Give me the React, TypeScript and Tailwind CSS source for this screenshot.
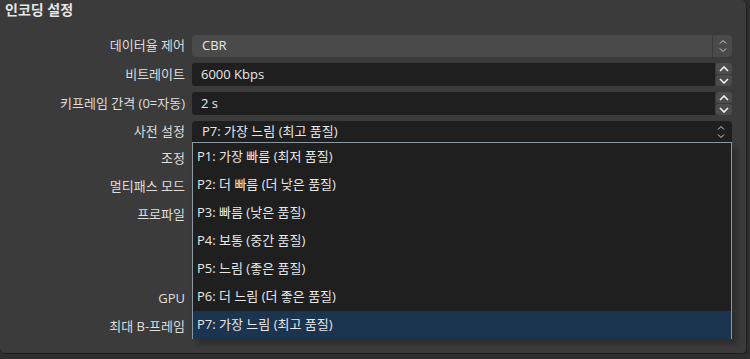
import React from 'react';

const presets = [
    'P1: 가장 빠름 (최저 품질)',
    'P2: 더 빠름 (더 낮은 품질)',
    'P3: 빠름 (낮은 품질)',
    'P4: 보통 (중간 품질)',
    'P5: 느림 (좋은 품질)',
    'P6: 더 느림 (더 좋은 품질)',
    'P7: 가장 느림 (최고 품질)',
];

const labels = [
    { text: '데이터율 제어', h: 'h-[28px]' },
    { text: '비트레이트', h: 'h-[29px]' },
    { text: '키프레임 간격 (0=자동)', h: 'h-[29px]' },
    { text: '사전 설정', h: 'h-[27px]' },
    { text: '조정', h: 'h-[28px]' },
    { text: '멀티패스 모드', h: 'h-[28px]' },
    { text: '프로파일', h: 'h-[28px]' },
    { text: '', h: 'h-[28px]' },
    { text: '', h: 'h-[28px]' },
    { text: 'GPU', h: 'h-[28px]' },
    { text: '최대 B-프레임', h: 'h-[28px]' },
];

const ComboArrows = () => (
    <svg width="8" height="14" viewBox="0 0 8 14" fill="none" stroke="#d8d8d8" strokeWidth="1">
        <polyline points="1,4.5 4,1.5 7,4.5" />
        <polyline points="1,9.5 4,12.5 7,9.5" />
    </svg>
);

const SpinButtons = () => (
    <div className="flex flex-col gap-[1px] w-[16px] h-full">
        <div className="flex-1 bg-[#4c4c4c] rounded-[3px] flex items-center justify-center">
            <svg width="10" height="6" viewBox="0 0 10 6" fill="none" stroke="#f0f0f0" strokeWidth="1.6">
                <polyline points="1,5 5,1 9,5" />
            </svg>
        </div>
        <div className="flex-1 bg-[#4c4c4c] rounded-[3px] flex items-center justify-center">
            <svg width="10" height="6" viewBox="0 0 10 6" fill="none" stroke="#f0f0f0" strokeWidth="1.6">
                <polyline points="1,1 5,5 9,1" />
            </svg>
        </div>
    </div>
);

const SpinBox = ({ value }: { value: string }) => (
    <div className="flex h-[23px] w-[540px] gap-[1px]">
        <div className="flex-1 bg-[#1f1f1f] rounded-l-[3px] flex items-center pl-[9px] text-[13px] text-[#e8e8e8]">
            {value}
        </div>
        <SpinButtons />
    </div>
);

export default function App() {
    return (
        <div className="w-[750px] h-[359px] bg-[#2e2e2e] [font-family:'Open_Sans','Noto_Sans_CJK_KR',sans-serif] overflow-hidden">
            <div className="relative w-[747px] h-[354px] bg-[#3b3b3b] rounded-tr-[5px] rounded-b-[5px] border-b border-r border-[#1e1e1e]">
                <div className="h-[32px] pl-[5px] pt-[1px] text-[14px] font-bold leading-[18px] text-[#e6e6e6]">
                    인코딩 설정
                </div>

                <div className="flex">
                    <div className="w-[192px] flex flex-col">
                        {labels.map((l, i) => (
                            <div
                                key={i}
                                className={`${l.h} flex items-center justify-end pr-[7px] text-[13px] text-[#dedede] whitespace-nowrap`}
                            >
                                {l.text}
                            </div>
                        ))}
                    </div>

                    <div className="flex flex-col">
                        <div className="h-[28px] flex items-center">
                            <div className="flex h-[22px] w-[540px] bg-[#4a4a4a] rounded-[4px]">
                                <div className="flex-1 flex items-center pl-[10px] text-[13px] text-[#e8e8e8]">CBR</div>
                                <div className="w-[20px] border-l border-[#3a3a3a] flex items-center justify-center">
                                    <ComboArrows />
                                </div>
                            </div>
                        </div>
                        <div className="h-[29px] flex items-center">
                            <SpinBox value="6000 Kbps" />
                        </div>
                        <div className="h-[29px] flex items-center">
                            <SpinBox value="2 s" />
                        </div>
                        <div className="h-[27px] flex items-end">
                            <div className="flex h-[24px] w-[540px] bg-[#1f1f1f] rounded-t-[4px]">
                                <div className="flex-1 flex items-center pl-[10px] pb-[2px] text-[13px] text-[#e8e8e8]">
                                    P7: 가장 느림 (최고 품질)
                                </div>
                                <div className="w-[22px] flex items-center justify-center pb-[2px]">
                                    <ComboArrows />
                                </div>
                            </div>
                        </div>
                    </div>
                </div>

                <div className="absolute left-[192px] top-[142px] w-[540px] h-[197px] bg-[#1f1f1f] border border-[#8e98a2] shadow-[5px_5px_6px_rgba(0,0,0,0.25)] flex flex-col">
                    {presets.map((p, i) => (
                        <div
                            key={p}
                            className={`h-[28px] shrink-0 flex items-center pl-[4px] text-[13px] text-[#e8e8e8] ${
                                i === presets.length - 1 ? 'bg-[#1b344f]' : ''
                            }`}
                        >
                            {p}
                        </div>
                    ))}
                </div>
            </div>
        </div>
    );
}
